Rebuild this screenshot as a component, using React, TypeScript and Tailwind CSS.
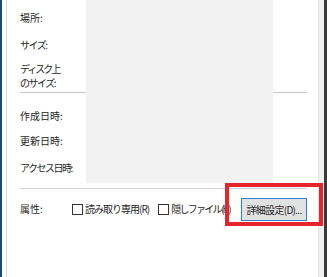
const font = { fontFamily: '"Noto Sans CJK JP", "Noto Sans", sans-serif' };

function Checkbox({ label, track }: { label: string; track: string }) {
  return (
    <div className="flex items-center whitespace-nowrap">
      <span className="w-[11px] h-[11px] border border-[#333333] bg-white shrink-0"></span>
      <span className={`ml-[2px] text-[10px] leading-[14px] text-[#262626] ${track}`}>{label}</span>
    </div>
  );
}

export default function App() {
  return (
    <div className="w-[327px] h-[277px] flex bg-white overflow-hidden" style={font}>
      {/* window frame, left */}
      <div className="w-[2px] bg-[#1f4a70]"></div>
      <div className="w-[4px] bg-white"></div>
      <div className="w-[1px] bg-[#dcdcdc]"></div>

      {/* dialog body */}
      <div className="relative flex-1 flex flex-col pl-[13px] pr-[11px] text-[10px] text-[#262626] whitespace-nowrap">
        <div className="mt-[11px] leading-[14px]">場所:</div>
        <div className="mt-[13px] leading-[14px] tracking-[-1.5px]">サイズ:</div>
        <div className="mt-[10px] leading-[14px]">
          <span className="tracking-[-2px]">ディスク</span>上
        </div>
        <div className="leading-[14px] tracking-[-1.5px]">のサイズ:</div>
        <div className="mt-[2px] h-[1px] bg-[#c8c8c8]"></div>
        <div className="mt-[16px] leading-[14px]">作成日時:</div>
        <div className="mt-[11px] leading-[14px]">更新日時:</div>
        <div className="mt-[13px] leading-[14px] tracking-[-1.5px]">アクセス日時:</div>
        <div className="mt-[13px] h-[1px] bg-[#d0d0d0]"></div>

        {/* attributes row */}
        <div className="mt-[8px] h-[24px] flex items-center">
          <div className="w-[52px] leading-[14px]">属性:</div>
          <Checkbox label="読み取り専用(R)" track="tracking-[-1px]" />
          <div className="ml-[9px]">
            <Checkbox label="隠しファイル(H)" track="tracking-[-1.7px]" />
          </div>
          <button className="ml-auto w-[66px] h-[23px] bg-[#e1e1e1] border border-[#2f7fd0] text-[10px] tracking-[-0.7px] text-[#262626] flex items-center justify-center">
            詳細設定(D)...
          </button>
        </div>

        {/* redacted value area */}
        <div className="absolute left-[79px] top-0 w-[187px] h-[183px] bg-[#f2f2f2]"></div>

        {/* red highlight annotation */}
        <div className="absolute left-[218px] top-[183px] w-[98px] h-[43px] border-[4px] border-[#e5252b]"></div>
      </div>

      {/* window frame, right */}
      <div className="w-[6px] bg-[#f0f0f0] border-l border-[#e6e6e6]"></div>
      <div className="w-[3px] bg-[#3a3a3a]"></div>
    </div>
  );
}
